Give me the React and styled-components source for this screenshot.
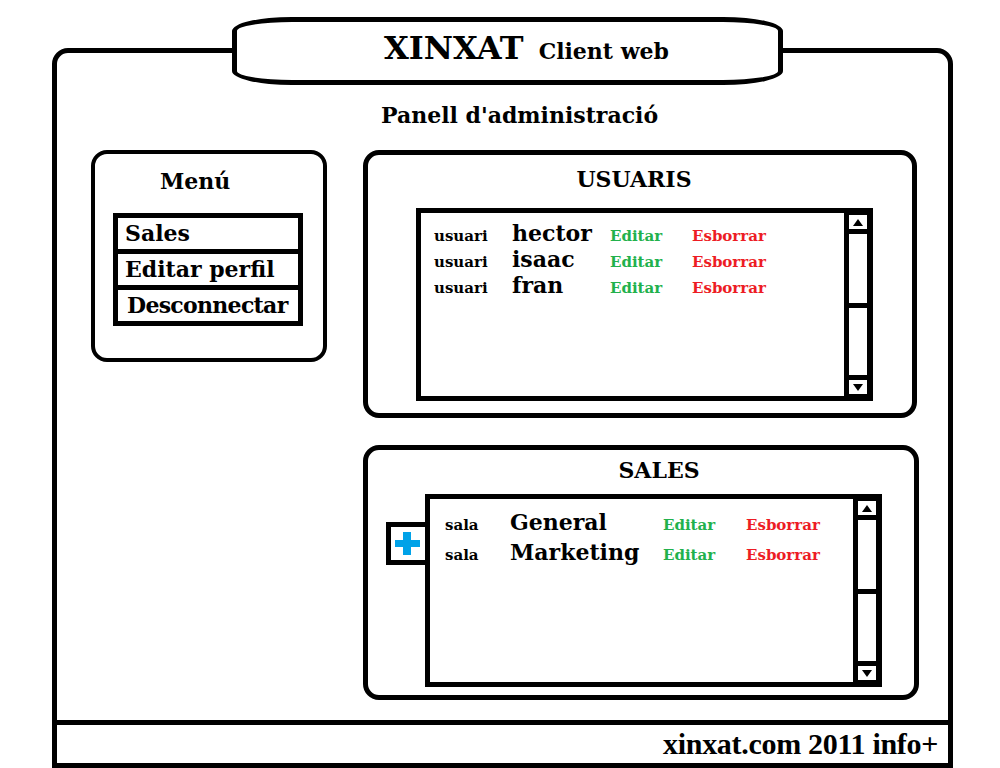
import styled, { createGlobalStyle } from "styled-components";

const GlobalStyle = createGlobalStyle`
  html, body {
    margin: 0;
    padding: 0;
    background: #fff;
  }
  body {
    font-family: "DejaVu Serif", "Liberation Serif", serif;
    font-weight: bold;
    color: #000;
  }
`;

const Page = styled.div`
  position: relative;
  width: 1000px;
  height: 768px;
  padding: 48px 0 0 52px;
  box-sizing: border-box;
  overflow: hidden;
`;

const HeaderPill = styled.div`
  position: absolute;
  left: 232px;
  top: 17px;
  width: 551px;
  height: 68px;
  box-sizing: border-box;
  border: 5px solid #000;
  border-radius: 60px / 14px;
  background: #fff;
  display: flex;
  align-items: baseline;
  gap: 15px;
  padding: 8px 0 0 147px;
  z-index: 2;
`;

const Brand = styled.span`
  font-size: 32px;
  line-height: 37px;
`;

const BrandSub = styled.span`
  font-size: 22px;
  line-height: 26px;
`;

const Frame = styled.div`
  width: 901px;
  height: 720px;
  box-sizing: border-box;
  border: 5px solid #000;
  border-radius: 16px 16px 0 0;
  display: flex;
  flex-direction: column;
`;

const Main = styled.div`
  flex: 1;
  padding: 49px 0 0 34px;
`;

const PageTitle = styled.h1`
  margin: 0;
  padding-left: 290px;
  font-size: 22px;
  line-height: 26px;
  font-weight: bold;
`;

const Content = styled.div`
  display: flex;
  align-items: flex-start;
  margin-top: 22px;
`;

const MenuBox = styled.nav`
  width: 236px;
  height: 212px;
  box-sizing: border-box;
  border: 4px solid #000;
  border-radius: 16px;
  padding-top: 14px;
`;

const MenuTitle = styled.div`
  padding-left: 65px;
  font-size: 22px;
  line-height: 26px;
`;

const MenuList = styled.div`
  margin: 19px 0 0 18px;
  width: 190px;
  box-sizing: border-box;
  border: 5px solid #000;
`;

const MenuItem = styled.div`
  height: 31px;
  line-height: 31px;
  padding-left: ${(p) => p.$indent || 7}px;
  font-size: 22px;
  letter-spacing: ${(p) => (p.$tight ? "-0.7px" : "normal")};
  white-space: nowrap;
  & + & {
    border-top: 5px solid #000;
  }
`;

const Panels = styled.div`
  margin-left: 36px;
  display: flex;
  flex-direction: column;
  gap: 27px;
`;

const Panel = styled.section`
  width: ${(p) => p.$width}px;
  height: ${(p) => p.$height}px;
  box-sizing: border-box;
  border: 5px solid #000;
  border-radius: 16px;
  padding-top: ${(p) => p.$top}px;
`;

const PanelTitle = styled.h2`
  margin: 0;
  text-align: center;
  font-size: 22px;
  line-height: 26px;
  font-weight: bold;
  transform: translateX(${(p) => p.$shift}px);
`;

const ListArea = styled.div`
  display: flex;
  align-items: flex-start;
  margin: ${(p) => p.$top}px 0 0 ${(p) => p.$left}px;
`;

const AddButton = styled.button`
  margin-top: 28px;
  width: 39px;
  height: 43px;
  box-sizing: border-box;
  border: 5px solid #000;
  border-right: none;
  background: #fff;
  padding: 5px 0 0 4px;
  display: flex;
  align-items: flex-start;
  cursor: pointer;
`;

const ListBox = styled.div`
  width: 457px;
  height: 193px;
  box-sizing: border-box;
  border: 5px solid #000;
  border-right-width: 6px;
  display: flex;
`;

const Rows = styled.div`
  flex: 1;
  padding: ${(p) => p.$top}px 0 0 ${(p) => p.$left}px;
`;

const Row = styled.div`
  display: grid;
  grid-template-columns: ${(p) => p.$cols};
  align-items: baseline;
  height: ${(p) => p.$h}px;
  line-height: ${(p) => p.$h}px;
  white-space: nowrap;
`;

const Label = styled.span`
  font-size: 15px;
`;

const Name = styled.span`
  font-size: 22px;
`;

const Action = styled.a`
  font-size: 15px;
  color: ${(p) => (p.$danger ? "#ed1c24" : "#22b14c")};
  text-decoration: none;
  cursor: pointer;
`;

const Scrollbar = styled.div`
  width: 23px;
  box-sizing: border-box;
  background: #000;
  padding: 2px 0 2px 5px;
  display: flex;
  flex-direction: column;
  gap: 5px;
`;

const ScrollButton = styled.div`
  height: 14px;
  background: #fff;
  display: flex;
  align-items: center;
  justify-content: center;
`;

const ScrollTrack = styled.div`
  flex: ${(p) => p.$grow};
  background: #fff;
`;

const Footer = styled.footer`
  height: 43px;
  box-sizing: border-box;
  border-top: 5px solid #000;
  padding-right: 10px;
  text-align: right;
  font-family: "Liberation Serif", "Times New Roman", serif;
  font-size: 30px;
  line-height: 38px;
  letter-spacing: -0.3px;
`;

const Arrow = ({ down }) => (
  <svg width="10" height="7" viewBox="0 0 10 7">
    <polygon points={down ? "0,0 10,0 5,7" : "5,0 10,7 0,7"} fill="#000" />
  </svg>
);

const PlusIcon = () => (
  <svg width="25" height="23" viewBox="0 0 25 23">
    <rect x="0" y="8" width="25" height="7" fill="#00a2e8" />
    <rect x="8" y="0" width="8" height="23" fill="#00a2e8" />
  </svg>
);

const ScrollList = ({ rows, cols, rowHeight, padTop, padLeft }) => (
  <ListBox>
    <Rows $top={padTop} $left={padLeft}>
      {rows.map((r) => (
        <Row key={r.name} $cols={cols} $h={rowHeight}>
          <Label>{r.label}</Label>
          <Name>{r.name}</Name>
          <Action>Editar</Action>
          <Action $danger>Esborrar</Action>
        </Row>
      ))}
    </Rows>
    <Scrollbar>
      <ScrollButton>
        <Arrow />
      </ScrollButton>
      <ScrollTrack $grow={70} />
      <ScrollTrack $grow={67} />
      <ScrollButton>
        <Arrow down />
      </ScrollButton>
    </Scrollbar>
  </ListBox>
);

const users = [
  { label: "usuari", name: "hector" },
  { label: "usuari", name: "isaac" },
  { label: "usuari", name: "fran" },
];

const rooms = [
  { label: "sala", name: "General" },
  { label: "sala", name: "Marketing" },
];

export default function App() {
  return (
    <>
      <GlobalStyle />
      <Page>
        <HeaderPill>
          <Brand>XINXAT</Brand>
          <BrandSub>Client web</BrandSub>
        </HeaderPill>
        <Frame>
          <Main>
            <PageTitle>Panell d'administració</PageTitle>
            <Content>
              <MenuBox>
                <MenuTitle>Menú</MenuTitle>
                <MenuList>
                  <MenuItem>Sales</MenuItem>
                  <MenuItem>Editar perfil</MenuItem>
                  <MenuItem $indent={9} $tight>
                    Desconnectar
                  </MenuItem>
                </MenuList>
              </MenuBox>
              <Panels>
                <Panel $width={554} $height={268} $top={11}>
                  <PanelTitle $shift={-6}>USUARIS</PanelTitle>
                  <ListArea $top={16} $left={48}>
                    <ScrollList rows={users} cols="78px 98px 82px auto" rowHeight={26} padTop={7} padLeft={13} />
                  </ListArea>
                </Panel>
                <Panel $width={556} $height={255} $top={7}>
                  <PanelTitle $shift={18}>SALES</PanelTitle>
                  <ListArea $top={11} $left={18}>
                    <AddButton aria-label="Afegir sala">
                      <PlusIcon />
                    </AddButton>
                    <ScrollList rows={rooms} cols="65px 153px 83px auto" rowHeight={30} padTop={8} padLeft={15} />
                  </ListArea>
                </Panel>
              </Panels>
            </Content>
          </Main>
          <Footer>xinxat.com 2011 info+</Footer>
        </Frame>
      </Page>
    </>
  );
}
